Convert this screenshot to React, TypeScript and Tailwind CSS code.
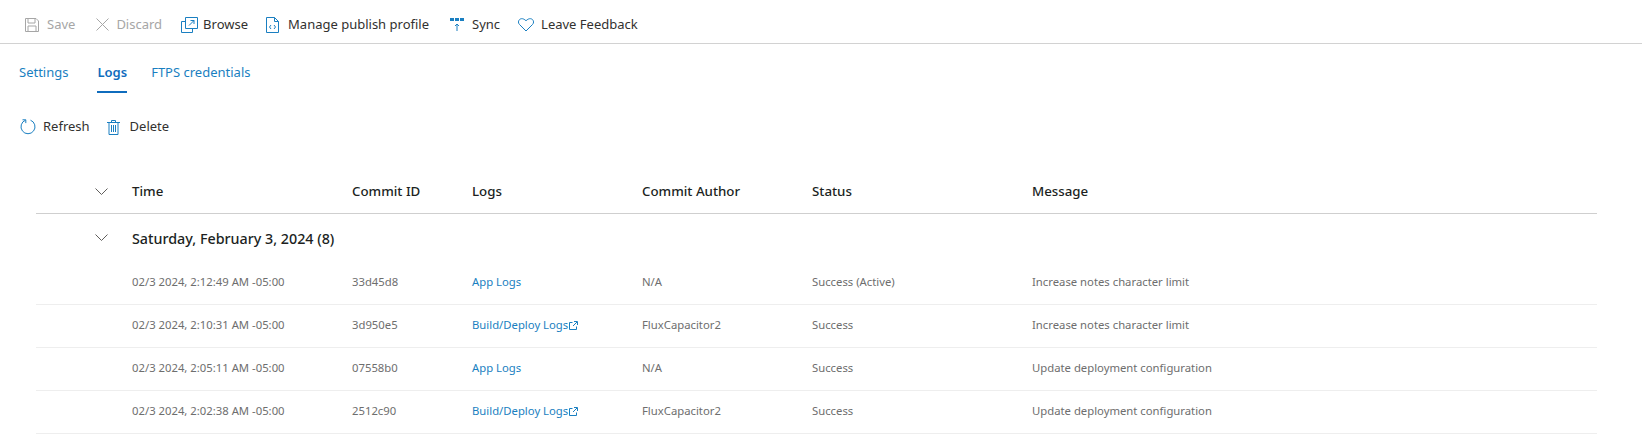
import React from 'react'

const FONT = "font-['Noto_Sans','Open_Sans',sans-serif]"

function SaveIcon() {
    return (
        <svg width="14" height="14" viewBox="0 0 14 14" fill="none" stroke="#a6a6a6" strokeWidth="1">
            <path d="M.5.5h10.500l2.500 2.500v10.500H.5z" />
            <path d="M3 .5v4.500h7V.5M3 13.500V8h8v5.500" />
        </svg>
    )
}

function DiscardIcon() {
    return (
        <svg width="13" height="13" viewBox="0 0 13 13" fill="none" stroke="#a6a6a6" strokeWidth="1">
            <path d="M.5.5l12 12M12.500.5l-12 12" />
        </svg>
    )
}

function BrowseIcon() {
    return (
        <svg width="17" height="16" viewBox="0 0 17 16" fill="none" stroke="#1a7fc1" strokeWidth="1">
            <path d="M4.500 4.500H.5v11h11v-4" />
            <path d="M4.500 11.500V.5h12v11z" />
            <path d="M8 8.500l5-5M9.500 3.500h3.500v3.500" />
        </svg>
    )
}

function ProfileIcon() {
    return (
        <svg width="13" height="16" viewBox="0 0 13 16" fill="none" stroke="#1a7fc1" strokeWidth="1">
            <path d="M.5.5h8l4 4v11H.5z" />
            <path d="M8.500.5v4h4" />
            <path d="M5 8L3.500 10 5 12M8 8l1.500 2L8 12" />
        </svg>
    )
}

function SyncIcon() {
    return (
        <svg width="14" height="14" viewBox="0 0 14 14" fill="none">
            <path d="M0 0h4v3H0zM5 0h4v3H5zM10 0h4v3h-4z" fill="#1a7fc1" />
            <path d="M7 13V6M5 8l2-2 2 2" stroke="#1a7fc1" strokeWidth="1" />
        </svg>
    )
}

function HeartIcon() {
    return (
        <svg width="16" height="14" viewBox="0 0 16 14" fill="none" stroke="#1a7fc1" strokeWidth="1">
            <path d="M8 13L1.500 6.500C0 5 .2 2.800 1.500 1.600 3 .2 5.500.2 8 2.800 10.500.2 13 .2 14.500 1.600 15.800 2.800 16 5 14.500 6.500z" />
        </svg>
    )
}

function RefreshIcon() {
    return (
        <svg width="16" height="16" viewBox="0 0 16 16" fill="none" stroke="#1a7fc1" strokeWidth="1">
            <path d="M5.500 1.200A7 7 0 1 0 10.500 1.200" />
            <path d="M2.500 .8h3.300v3.300" />
        </svg>
    )
}

function TrashIcon() {
    return (
        <svg width="13" height="15" viewBox="0 0 13 15" fill="none" stroke="#1a7fc1" strokeWidth="1">
            <path d="M0 2.500h13M4.500 2.500V.5h4v2M2 2.500v12h9v-12" />
            <path d="M4.500 5v7M6.500 5v7M8.500 5v7" />
        </svg>
    )
}

function Chevron() {
    return (
        <svg width="13" height="7" viewBox="0 0 13 7" fill="none" stroke="#605e5c" strokeWidth="1">
            <path d="M.5.500l6 6 6-6" />
        </svg>
    )
}

function ExternalIcon() {
    return (
        <svg width="9" height="9" viewBox="0 0 9 9" fill="none" stroke="#1a7fc1" strokeWidth="1" className="ml-px">
            <path d="M3.500 1.500h-3v7h7v-3M4 5l4-4M5 .5h3.500V4" />
        </svg>
    )
}

function ToolbarButton({ icon, label, disabled, className }: { icon: React.ReactNode, label: string, disabled?: boolean, className?: string }) {
    return (
        <div className={`flex items-center ${className}`}>
            {icon}
            <span className={disabled ? 'text-[#a6a6a6]' : 'text-[#323130]'}>{label}</span>
        </div>
    )
}

const rows = [
    { time: '02/3 2024, 2:12:49 AM -05:00', commit: '33d45d8', logs: 'App Logs', external: false, author: 'N/A', status: 'Success (Active)', message: 'Increase notes character limit' },
    { time: '02/3 2024, 2:10:31 AM -05:00', commit: '3d950e5', logs: 'Build/Deploy Logs', external: true, author: 'FluxCapacitor2', status: 'Success', message: 'Increase notes character limit' },
    { time: '02/3 2024, 2:05:11 AM -05:00', commit: '07558b0', logs: 'App Logs', external: false, author: 'N/A', status: 'Success', message: 'Update deployment configuration' },
    { time: '02/3 2024, 2:02:38 AM -05:00', commit: '2512c90', logs: 'Build/Deploy Logs', external: true, author: 'FluxCapacitor2', status: 'Success', message: 'Update deployment configuration' },
]

const COLS = 'grid grid-cols-[96px_220px_120px_170px_170px_220px_1fr]'

export default function App() {
    return (
        <div className={`${FONT} h-[436px] w-[1642px] overflow-hidden bg-white text-[13px]`}>
            <div className="flex h-[44px] items-center border-b border-[#d2d2d2] pl-[25px] pt-[6px]">
                <ToolbarButton icon={<SaveIcon />} label="Save" disabled className="gap-[8px]" />
                <ToolbarButton icon={<DiscardIcon />} label="Discard" disabled className="ml-[21px] gap-[7px]" />
                <ToolbarButton icon={<BrowseIcon />} label="Browse" className="ml-[19px] gap-[5px]" />
                <ToolbarButton icon={<ProfileIcon />} label="Manage publish profile" className="ml-[18px] gap-[9px]" />
                <ToolbarButton icon={<SyncIcon />} label="Sync" className="ml-[21px] gap-[8px]" />
                <ToolbarButton icon={<HeartIcon />} label="Leave Feedback" className="ml-[18px] gap-[7px]" />
            </div>

            <div className="flex h-[49px] pl-[19px]">
                <div className="flex items-center pt-[9px] text-[#1a7fc1]">Settings</div>
                <div className="ml-[29px] flex items-center border-b-[2px] border-[#0f6cbd] pt-[11px] font-semibold text-[#0f6cbd]">Logs</div>
                <div className="ml-[24px] flex items-center pt-[9px] text-[#1a7fc1]">FTPS credentials</div>
            </div>

            <div className="mt-[24px] flex h-[20px] items-center pl-[20px] text-[#323130]">
                <div className="flex items-center gap-[7px]"><RefreshIcon /><span>Refresh</span></div>
                <div className="ml-[17px] flex items-center gap-[10px]"><TrashIcon /><span>Delete</span></div>
            </div>

            <div className="ml-[36px] mt-[29px] w-[1561px]">
                <div className={`${COLS} h-[48px] items-center border-b border-[#cfcfcf] pt-[4px] text-[13.3px] font-medium text-[#201f1e]`}>
                    <div className="pl-[59px] pb-[1px]"><Chevron /></div>
                    <div>Time</div>
                    <div>Commit ID</div>
                    <div>Logs</div>
                    <div>Commit Author</div>
                    <div>Status</div>
                    <div>Message</div>
                </div>
                <div className={`${COLS} h-[48px] items-center text-[#201f1e]`}>
                    <div className="pl-[59px] pb-[1px]"><Chevron /></div>
                    <div className="col-span-6 pt-[2px] text-[14.3px] font-medium">Saturday, February 3, 2024 (8)</div>
                </div>
                {rows.map(row => (
                    <div key={row.time} className={`${COLS} h-[43px] items-center border-b border-[#eeeeee] pb-[2px] text-[11.3px] text-[#6e6e6e]`}>
                        <div />
                        <div>{row.time}</div>
                        <div>{row.commit}</div>
                        <div className="flex items-center text-[#1a7fc1]">
                            {row.logs}
                            {row.external && <ExternalIcon />}
                        </div>
                        <div>{row.author}</div>
                        <div>{row.status}</div>
                        <div>{row.message}</div>
                    </div>
                ))}
            </div>
        </div>
    )
}
